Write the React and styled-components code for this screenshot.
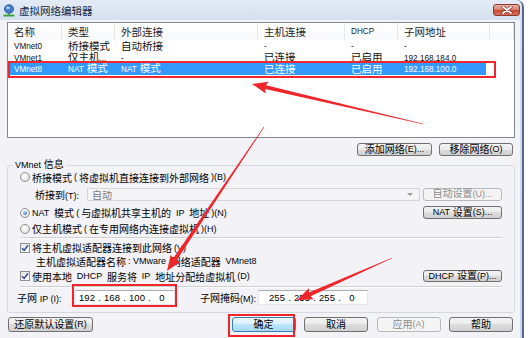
import React from "react";
import styled, { createGlobalStyle } from "styled-components";

const GlobalStyle = createGlobalStyle`
  html, body {
    margin: 0;
    padding: 0;
    background: #fff;
    overflow: hidden;
  }
  body {
    font-family: "Liberation Sans", "Noto Sans CJK SC", sans-serif;
    font-size: 10px;
    color: #000;
    text-autospace: no-autospace;
  }
`;

const Stage = styled.div`
  position: relative;
  width: 530px;
  height: 338px;
  overflow: hidden;
`;

const Window = styled.div`
  width: 524px;
  height: 360px;
  box-sizing: border-box;
  background: linear-gradient(#e3ebf5, #d2dfee 22px, #c9d8eb);
  border-right: 2px solid #56698a;
  border-top-right-radius: 7px;
  display: flex;
  flex-direction: column;
`;

const TitleBar = styled.div`
  height: 20px;
  flex: none;
  display: flex;
  align-items: center;
  gap: 4px;
  padding: 0 2px 0 3px;
`;

const Title = styled.span`
  font-size: 10.5px;
  color: #1b2433;
`;

const CloseBtn = styled.div`
  margin-left: auto;
  width: 27px;
  height: 12px;
  box-sizing: border-box;
  border: 1px solid #8d3b2e;
  border-radius: 3px;
  background: linear-gradient(#eab2a5, #d77b66 50%, #c4462e 50%, #d6715b);
  display: flex;
  align-items: center;
  justify-content: center;
`;

const Client = styled.div`
  flex: 1;
  margin-right: 2px;
  background: #f3f2f6;
  padding: 2px 5px 0 7px;
`;

/* list view */
const List = styled.div`
  height: 116px;
  box-sizing: border-box;
  border: 1px solid #828790;
  background: #fff;
  font-size: 10.5px;
`;

const Head = styled.div`
  display: grid;
  grid-template-columns: 54px 53px 143px 87px 53px 92px 1fr;
  height: 17px;
  background: linear-gradient(#fff, #f8f9fb);
`;

const HeadCell = styled.div`
  display: flex;
  align-items: center;
  padding-left: 6px;
  border-right: 1px solid #e4e7ec;
  color: #1e1e1e;
`;

const Row = styled.div`
  display: grid;
  grid-template-columns: 52px 53px 143px 87px 53px 88px;
  width: 476px;
  margin-left: 2px;
  height: 11.5px;
  align-items: center;
  white-space: nowrap;
  background: ${(p) => (p.$selected ? "#3399ff" : "transparent")};
  color: ${(p) => (p.$selected ? "#fff" : "#111")};
`;

const Cell = styled.div`
  padding-left: 6px;
  line-height: 11px;
  &:first-child {
    padding-left: 4px;
  }
`;

const Lat = styled.span`
  font-size: ${(p) => p.$scale}em;
`;

const Txt = ({ children, scale = 0.9 }) =>
  String(children)
    .split(/([!-~][ -~]*[!-~]|[!-~])/)
    .map((part, i) =>
      i % 2 ? (
        <Lat key={i} $scale={scale}>
          {part}
        </Lat>
      ) : (
        part
      )
    );

/* buttons */
const Button = styled.div`
  width: ${(p) => p.$w}px;
  height: ${(p) => p.$h || 13}px;
  flex: none;
  box-sizing: border-box;
  display: flex;
  align-items: center;
  justify-content: center;
  white-space: pre;
  line-height: 1;
  border-radius: 3px;
  border: 1px solid ${(p) => (p.$off ? "#b5b9bc" : p.$main ? "#3c7fb1" : "#707070")};
  color: ${(p) => (p.$off ? "#8a8a8a" : "#000")};
  background: ${(p) =>
    p.$off
      ? "#f4f4f4"
      : p.$main
      ? "linear-gradient(#eaf6fd, #d9f0fc 50%, #bee6fd 50%, #a7d9f5)"
      : "linear-gradient(#f3f3f3, #ebebeb 50%, #dddddd 50%, #d0d0d0)"};
`;

const ListActions = styled.div`
  display: flex;
  justify-content: flex-end;
  gap: 7px;
  margin: 5px 2px 0 0;
`;

/* group box */
const Group = styled.fieldset`
  margin: 3px 0 0;
  padding: 0 12px 5px;
  border: 1px solid #d3d9df;
  border-radius: 3px;
  min-inline-size: 0;
`;

const Legend = styled.legend`
  padding: 0 2px;
  margin-left: -7px;
  height: 12px;
  line-height: 12px;
`;

const Line = styled.div`
  display: flex;
  align-items: center;
  height: ${(p) => p.$h}px;
  gap: ${(p) => p.$gap ?? 2}px;
  padding-left: ${(p) => p.$indent || 0}px;
  margin-left: ${(p) => p.$pull || 0}px;
  white-space: pre;
`;

const Rule = styled.div`
  height: 0;
  border-top: 1px solid #d0d0d0;
  border-bottom: 1px solid #fff;
`;

const Radio = styled.span`
  width: 10px;
  height: 10px;
  flex: none;
  box-sizing: border-box;
  border-radius: 50%;
  border: 1px solid #8e8f8f;
  background: radial-gradient(circle at 40% 35%, #fff, #d8d8d8);
  display: flex;
  align-items: center;
  justify-content: center;
  &::after {
    content: "";
    width: 4px;
    height: 4px;
    border-radius: 50%;
    background: ${(p) =>
      p.$on ? "radial-gradient(circle at 35% 35%, #a8d8ff, #1b5fb5)" : "transparent"};
  }
`;

const Box = styled.span`
  width: 10px;
  height: 10px;
  flex: none;
  box-sizing: border-box;
  border: 1px solid #8f8f8f;
  background: linear-gradient(135deg, #e3e3e3, #fff);
  display: flex;
  align-items: center;
  justify-content: center;
`;

const FieldLabel = styled.span`
  width: ${(p) => p.$w}px;
  margin-left: ${(p) => p.$gapLeft || 0}px;
  flex: none;
`;

const Combo = styled.div`
  flex: 1;
  height: 13px;
  box-sizing: border-box;
  border: 1px solid #d5d5d5;
  background: #f4f3f6;
  color: #7a7a7a;
  display: flex;
  align-items: center;
  padding: 0 6px 0 4px;
  margin-right: 3px;
`;

const Caret = styled.span`
  margin-left: auto;
  width: 0;
  height: 0;
  border-left: 3px solid transparent;
  border-right: 3px solid transparent;
  border-top: 3px solid #9a9a9a;
`;

const Push = styled.div`
  margin-left: auto;
`;

const IpBox = styled.div`
  width: ${(p) => p.$w}px;
  height: 15px;
  flex: none;
  box-sizing: border-box;
  border: 1px solid #e2e7ed;
  border-top-color: #abadb3;
  background: #fff;
  display: flex;
  align-items: center;
  padding-left: ${(p) => p.$pad}px;
`;

const Octet = styled.span`
  width: 20px;
  text-align: center;
  font-size: 9.5px;
`;

const Dot = styled.span`
  width: 5px;
  text-align: center;
  font-size: 9.5px;
`;

const Footer = styled.div`
  display: flex;
  align-items: center;
  margin: 4px 2px 0 1px;
`;

const FooterRight = styled.div`
  margin-left: auto;
  display: flex;
  gap: 8.5px;
`;

const Overlay = styled.svg`
  position: absolute;
  left: 0;
  top: 0;
  pointer-events: none;
`;

const rows = [
  ["VMnet0", "桥接模式", "自动桥接", "-", "-", "-"],
  ["VMnet1", "仅主机...", "-", "已连接", "已启用", "192.168.184.0"],
  ["VMnet8", "NAT 模式", "NAT 模式", "已连接", "已启用", "192.168.100.0"],
];

const heads = ["名称", "类型", "外部连接", "主机连接", "DHCP", "子网地址", ""];

const arrowPoints = ([tx, ty], [hx, hy]) => {
  const len = Math.hypot(hx - tx, hy - ty);
  const ux = (hx - tx) / len;
  const uy = (hy - ty) / len;
  const nx = -uy;
  const ny = ux;
  const bx = hx - ux * 14;
  const by = hy - uy * 14;
  const pts = [
    [tx + nx * 0.3, ty + ny * 0.3],
    [bx + nx * 2, by + ny * 2],
    [bx - ux * 1.5 + nx * 6, by - uy * 1.5 + ny * 6],
    [hx, hy],
    [bx - ux * 1.5 - nx * 6, by - uy * 1.5 - ny * 6],
    [bx - nx * 2, by - ny * 2],
    [tx - nx * 0.3, ty - ny * 0.3],
  ];
  return pts.map((p) => p.map((v) => v.toFixed(1)).join(",")).join(" ");
};

const NetIcon = () => (
  <svg width="12" height="13" viewBox="0 0 12 13">
    <ellipse cx="6" cy="5" rx="4.6" ry="4.2" fill="#3f7fce" stroke="#1d4c8f" strokeWidth="0.8" />
    <ellipse cx="5" cy="3.8" rx="2" ry="1.4" fill="#a9d1fb" />
    <rect x="5.3" y="9" width="1.4" height="2" fill="#4c6d8f" />
    <rect x="0.5" y="10.6" width="11" height="2" rx="0.6" fill="#3ea43a" />
  </svg>
);

const CloseGlyph = () => (
  <svg width="12" height="8" viewBox="0 0 12 8">
    <path d="M2 1 L10 7 M10 1 L2 7" stroke="#6b2317" strokeWidth="3" strokeLinecap="round" />
    <path d="M2 1 L10 7 M10 1 L2 7" stroke="#fff" strokeWidth="1.8" strokeLinecap="round" />
  </svg>
);

const Tick = () => (
  <svg width="8" height="8" viewBox="0 0 8 8">
    <path d="M1 4.2 L3.2 6.4 L7 1.3" fill="none" stroke="#2c4a8e" strokeWidth="1.5" />
  </svg>
);

const Ip = ({ parts, w, pad }) => (
  <IpBox $w={w} $pad={pad}>
    {parts.map((p, i) => (
      <React.Fragment key={i}>
        {i > 0 && <Dot>.</Dot>}
        <Octet>{p}</Octet>
      </React.Fragment>
    ))}
  </IpBox>
);

export default function App() {
  return (
    <Stage>
      <GlobalStyle />
      <Window>
        <TitleBar>
          <NetIcon />
          <Title>虚拟网络编辑器</Title>
          <CloseBtn>
            <CloseGlyph />
          </CloseBtn>
        </TitleBar>

        <Client>
          <List>
            <Head>
              {heads.map((h, i) => (
                <HeadCell key={i}>
                  <Txt scale={0.78}>{h}</Txt>
                </HeadCell>
              ))}
            </Head>
            {rows.map((r, i) => (
              <Row key={r[0]} $selected={i === 2}>
                {r.map((c, j) => (
                  <Cell key={j}>
                    <Txt scale={0.78}>{c}</Txt>
                  </Cell>
                ))}
              </Row>
            ))}
          </List>

          <ListActions>
            <Button $w={75}>
              <Txt>添加网络(E)...</Txt>
            </Button>
            <Button $w={74}>
              <Txt>移除网络(O)</Txt>
            </Button>
          </ListActions>

          <Group>
            <Legend>
              <Txt>VMnet 信息</Txt>
            </Legend>

            <Line $h={12}>
              <Radio />
              <Txt>桥接模式(将虚拟机直接连接到外部网络)(B)</Txt>
            </Line>
            <Line $h={22} $indent={15} $gap={0}>
              <FieldLabel $w={52}>
                <Txt>桥接到(T):</Txt>
              </FieldLabel>
              <Combo>
                自动
                <Caret />
              </Combo>
              <Button $w={79} $off>
                <Txt>自动设置(U)...</Txt>
              </Button>
            </Line>
            <Line $h={15}>
              <Radio $on />
              <Txt>NAT 模式(与虚拟机共享主机的 IP 地址)(N)</Txt>
              <Push>
                <Button $w={79}>
                  <Txt>NAT 设置(S)...</Txt>
                </Button>
              </Push>
            </Line>
            <Line $h={17}>
              <Radio />
              <Txt>仅主机模式(在专用网络内连接虚拟机)(H)</Txt>
            </Line>
            <Rule />
            <Line $h={17}>
              <Box>
                <Tick />
              </Box>
              <Txt>将主机虚拟适配器连接到此网络(V)</Txt>
            </Line>
            <Line $h={10} $indent={16}>
              <Txt>主机虚拟适配器名称: VMware 网络适配器 VMnet8</Txt>
            </Line>
            <Line $h={20}>
              <Box>
                <Tick />
              </Box>
              <Txt>使用本地 DHCP 服务将 IP 地址分配给虚拟机(D)</Txt>
              <Push>
                <Button $w={79} $h={12}>
                  <Txt>DHCP 设置(P)...</Txt>
                </Button>
              </Push>
            </Line>
            <Rule />
            <Line $h={19} $pull={-3} $gap={0}>
              <FieldLabel $w={58}>
                <Txt>子网 IP (I):</Txt>
              </FieldLabel>
              <Ip parts={["192", "168", "100", "0"]} w={100} pad={1} />
              <FieldLabel $w={58} $gapLeft={25}>
                <Txt>子网掩码(M):</Txt>
              </FieldLabel>
              <Ip parts={["255", "255", "255", "0"]} w={110} pad={8} />
            </Line>
          </Group>

          <Footer>
            <Button $w={85} $h={15}>
              <Txt>还原默认设置(R)</Txt>
            </Button>
            <FooterRight>
              <Button $w={64} $h={15} $main>
                确定
              </Button>
              <Button $w={64} $h={15}>
                取消
              </Button>
              <Button $w={64} $h={15} $off>
                <Txt>应用(A)</Txt>
              </Button>
              <Button $w={64} $h={15}>
                帮助
              </Button>
            </FooterRight>
          </Footer>
        </Client>
      </Window>

      <Overlay width="530" height="338" viewBox="0 0 530 338">
        <g fill="none" stroke="#f0262a" strokeWidth="2">
          <rect x="9" y="62" width="486" height="15" />
          <rect x="73" y="285" width="103" height="21" />
          <rect x="229" y="315" width="65" height="21" />
        </g>
        <g fill="#f0262a">
          <polygon points={arrowPoints([423, 124], [252, 84])} />
          <polygon points={arrowPoints([264, 127], [167, 271])} />
          <polygon points={arrowPoints([392, 258], [297, 300])} />
        </g>
      </Overlay>
    </Stage>
  );
}
